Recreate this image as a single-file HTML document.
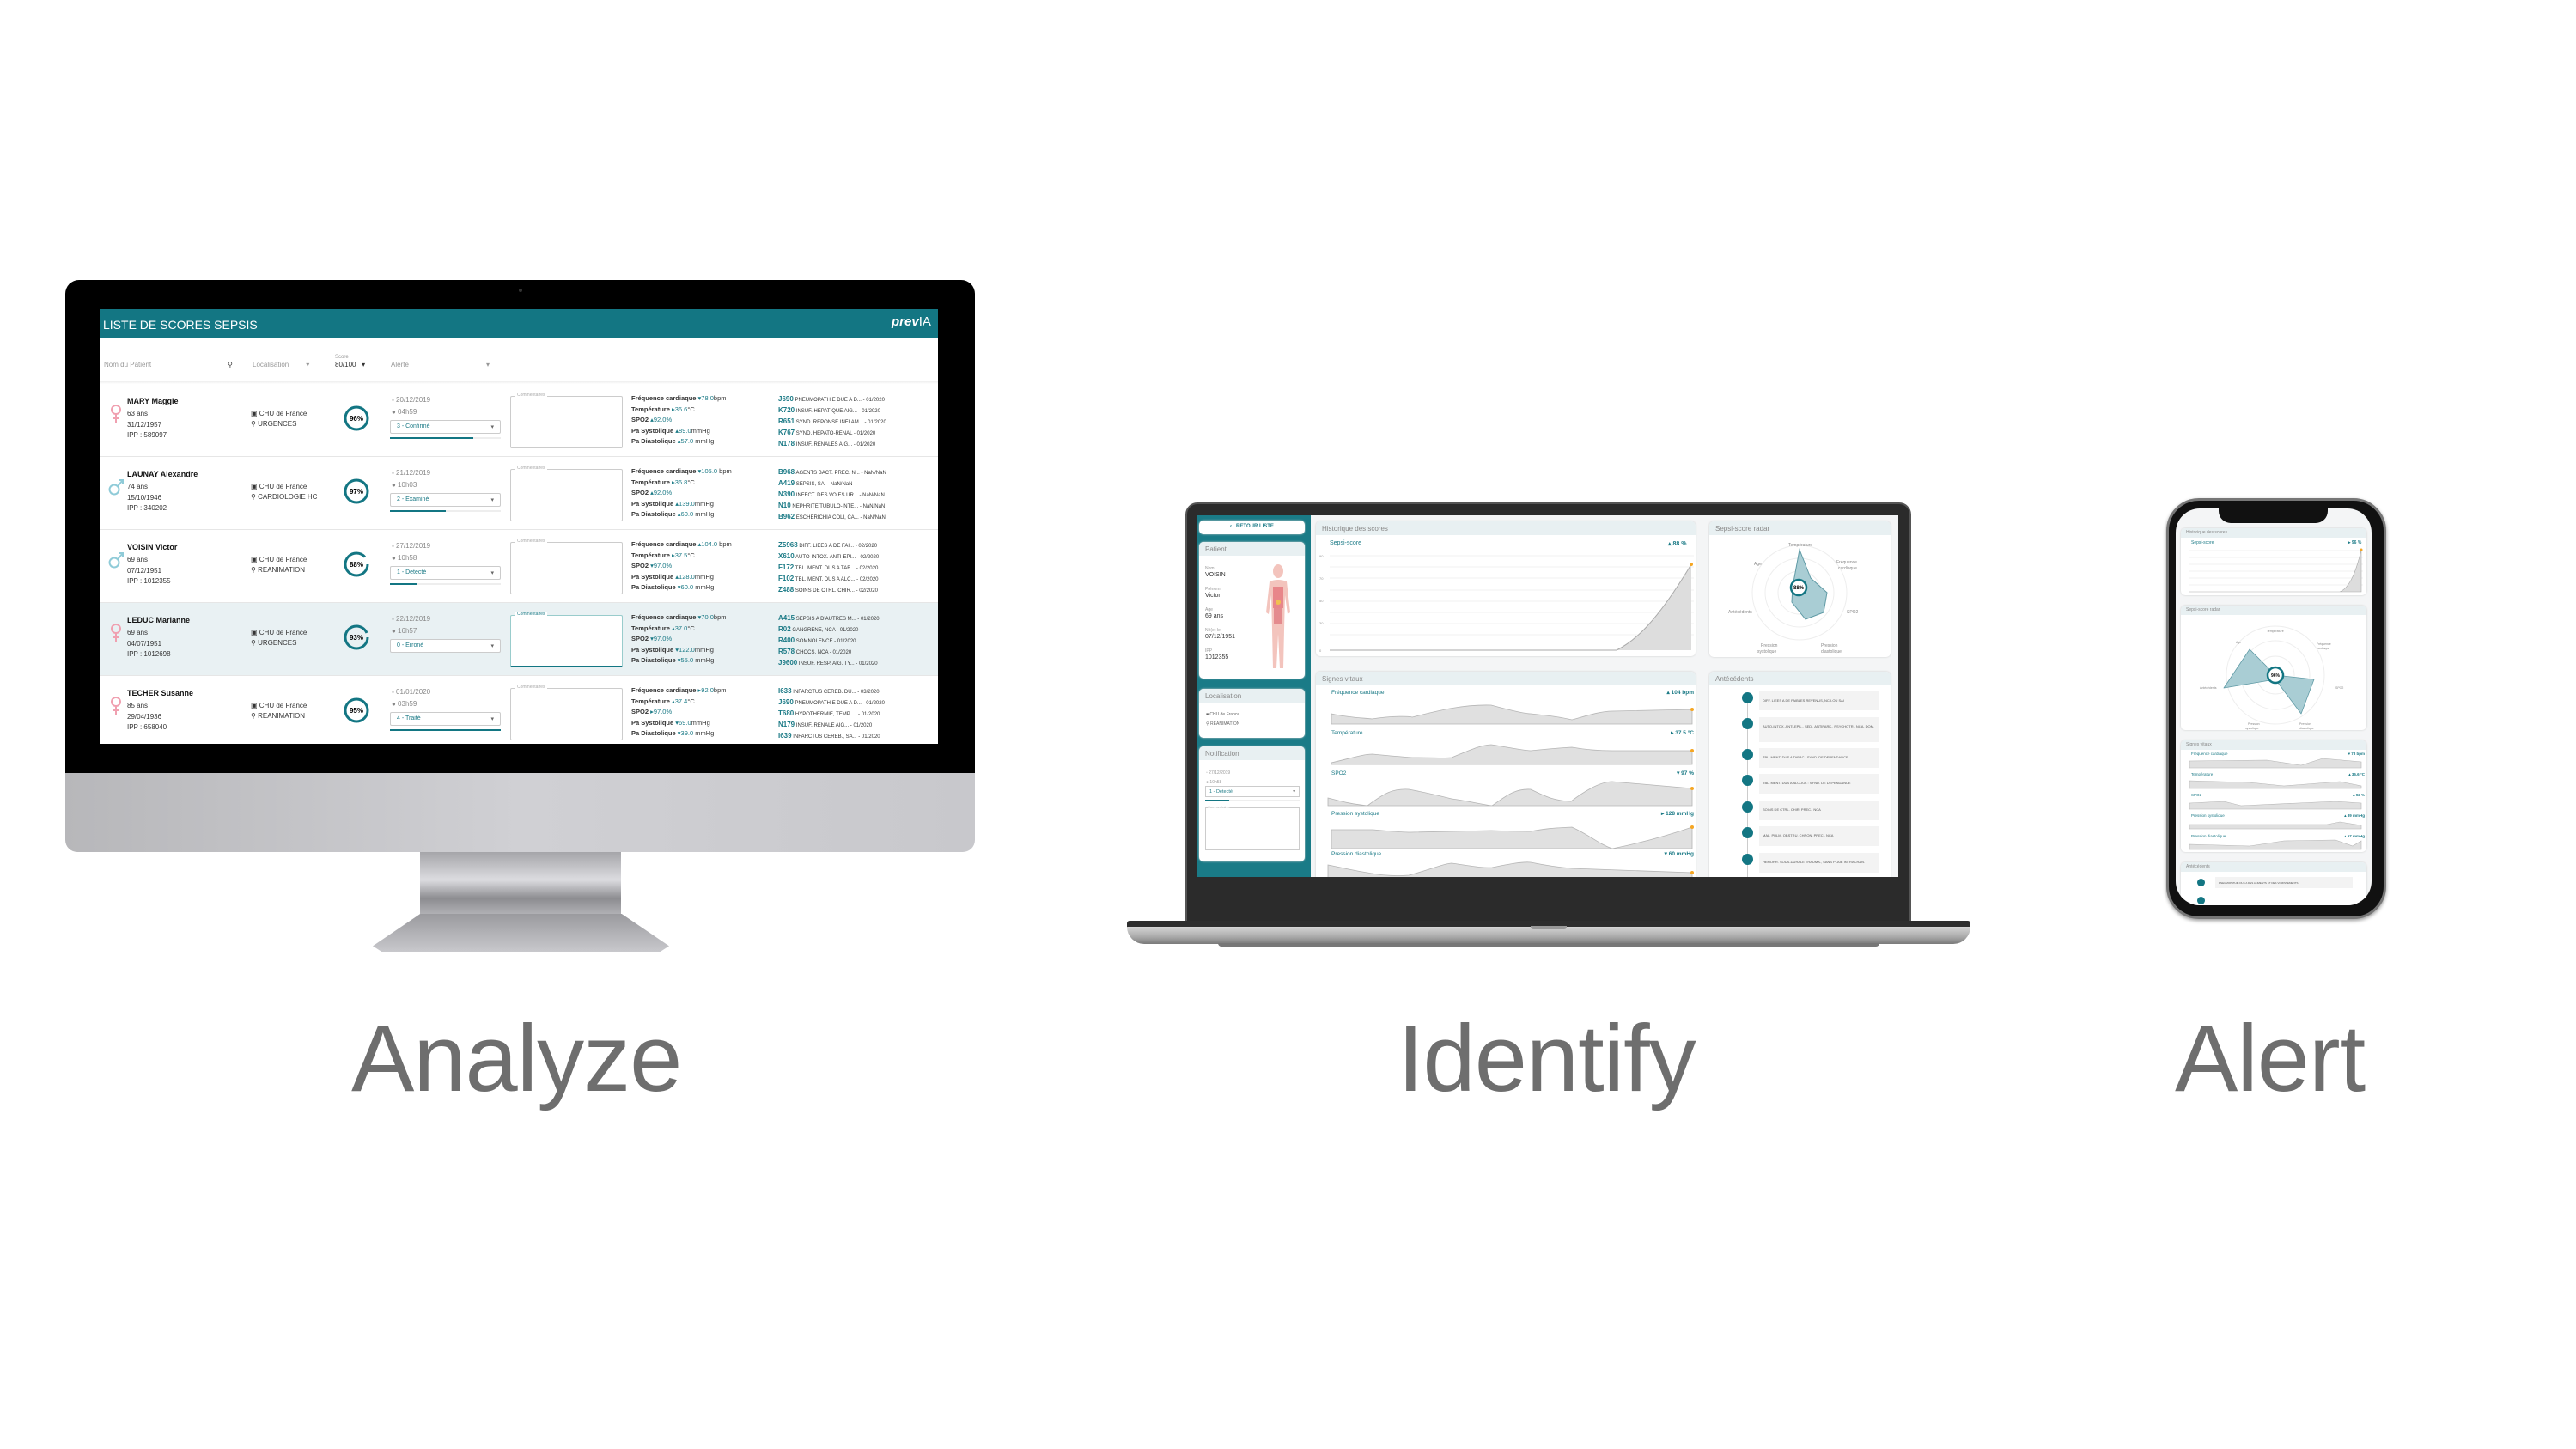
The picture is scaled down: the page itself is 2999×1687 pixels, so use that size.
<!DOCTYPE html>
<html><head><meta charset="utf-8"><style>
*{margin:0;padding:0;box-sizing:border-box}
body{width:2999px;height:1687px;background:#fff;position:relative;overflow:hidden;font-family:"Liberation Sans",sans-serif}
.a{position:absolute}
.lbl{position:absolute;font-size:110px;color:#6e6e6e;letter-spacing:-1px;top:1178px;line-height:1}
.t{position:absolute;white-space:nowrap}
.row{position:absolute;left:0;width:976px;height:85px;border-bottom:1px solid #e6e6e6;font-size:8px;color:#333}
.teal{color:#1b7a86}
.card{position:absolute;background:#fff;border-radius:5px;box-shadow:0 0 2px #ccc;overflow:hidden}
.ch{background:#e8f0f2;color:#888;font-size:8px;padding:4px 7px;height:16px}
</style></head><body>

<!-- MONITOR -->
<div class="a" style="left:76px;top:326px;width:1059px;height:576px;background:#000;border-radius:16px 16px 0 0"></div>
<div class="a" style="left:76px;top:900px;width:1059px;height:92px;background:linear-gradient(90deg,#b7b7ba,#d0d0d4 50%,#c8c8cc);border-radius:0 0 14px 14px"></div>
<div class="a" style="left:489px;top:992px;width:234px;height:72px;background:linear-gradient(180deg,#a5a5a9,#dcdce0 45%,#8c8c90 75%,#b0b0b4)"></div>
<div class="a" style="left:434px;top:1064px;width:345px;height:44px;background:linear-gradient(180deg,#9a9a9e,#c8c8cc);clip-path:polygon(16% 0,84% 0,100% 85%,97% 100%,3% 100%,0 85%)"></div>
<div class="a" style="left:604px;top:336px;width:4px;height:4px;border-radius:2px;background:#333"></div>

<div class="a" style="left:116px;top:360px;width:976px;height:506px;background:#fff;overflow:hidden">
  <div class="a" style="left:0;top:0;width:976px;height:33px;background:#137683"></div>
  <div class="t" style="left:4px;top:10px;color:#fff;font-size:14px">LISTE DE SCORES SEPSIS</div>
  <div class="t" style="left:922px;top:6px;color:#fff;font-size:15px;font-weight:bold;font-style:italic">prev<span style="font-weight:normal;font-style:normal">IA</span></div>
  <div class="t" style="left:5px;top:60px;font-size:8px;color:#999">Nom du Patient</div>
  <div class="a" style="left:5px;top:75px;width:156px;height:1px;background:#aaa"></div>
  <div class="t" style="left:149px;top:60px;font-size:8px;color:#333">&#9906;</div>
  <div class="t" style="left:178px;top:60px;font-size:8px;color:#999">Localisation &nbsp; &nbsp; &nbsp; &nbsp; ▾</div>
  <div class="a" style="left:178px;top:75px;width:80px;height:1px;background:#aaa"></div>
  <div class="t" style="left:274px;top:53px;font-size:6px;color:#999">Score</div>
  <div class="t" style="left:274px;top:60px;font-size:8px;color:#333">80/100 &nbsp; ▾</div>
  <div class="a" style="left:274px;top:75px;width:48px;height:1px;background:#aaa"></div>
  <div class="t" style="left:339px;top:60px;font-size:8px;color:#999">Alerte</div>
  <div class="t" style="left:450px;top:60px;font-size:8px;color:#999">▾</div>
  <div class="a" style="left:339px;top:75px;width:122px;height:1px;background:#aaa"></div>
  <div class="a" style="left:0;top:84px;width:976px;height:3px;background:linear-gradient(#eee,#fff)"></div>

  <div class="row" style="top:87px">
   <svg class="a" style="left:12px;top:24px" width="14" height="22"><circle cx="7" cy="6" r="5" fill="none" stroke="#f0a0b0" stroke-width="2"/><path d="M7 11V21M3 16H11" stroke="#f0a0b0" stroke-width="2"/></svg>
   <div class="t" style="left:32px;top:15px;font-size:9px;font-weight:bold;color:#111">MARY Maggie</div>
   <div class="t" style="left:32px;top:29px;line-height:12.5px">63 ans<br>31/12/1957<br>IPP : 589097</div>
   <div class="t" style="left:176px;top:29px;line-height:12px">▣ CHU de France<br>⚲ URGENCES</div>
   <svg class="a" style="left:284px;top:25px" width="30" height="30"><circle cx="15" cy="15" r="13" fill="none" stroke="#137683" stroke-width="3"/><text x="15" y="18" font-size="8" font-weight="bold" text-anchor="middle" font-family="Liberation Sans">96%</text></svg>
   <div class="t" style="left:340px;top:12px;color:#888;line-height:14px">▫ 20/12/2019<br>● 04h59</div>
   <div class="a" style="left:338px;top:42px;width:129px;height:16px;border:1px solid #ccc;border-radius:2px;font-size:7px;color:#1b7a86;padding:3px 7px">3 - Confirmé<span style="float:right;color:#666">▾</span></div>
   <div class="a" style="left:338px;top:62px;width:129px;height:2px;background:#eee"><div style="width:75%;height:2px;background:#137683"></div></div>
   <div class="a" style="left:478px;top:14px;width:131px;height:61px;border:1px solid #ccc;border-radius:2px"></div>
   <div class="t" style="left:484px;top:10px;font-size:5px;color:#aaa;background:#fff;padding:0 2px">Commentaires</div>
   <div class="t" style="left:619px;top:11px;line-height:12.5px;font-size:7.5px"><b>Fréquence cardiaque</b> <span class="teal">▾78.0</span>bpm<br><b>Température</b> <span class="teal">▸36.6</span>°C<br><b>SPO2</b> <span class="teal">▴92.0%</span><br><b>Pa Systolique</b> <span class="teal">▴89.0</span>mmHg<br><b>Pa Diastolique</b> <span class="teal">▴57.0</span> mmHg</div>
   <div class="t" style="left:790px;top:12px;line-height:12px;font-size:6px"><b class="teal" style="font-size:8px">J690</b> PNEUMOPATHIE DUE A D... - 01/2020<br><b class="teal" style="font-size:8px">K720</b> INSUF. HEPATIQUE AIG... - 01/2020<br><b class="teal" style="font-size:8px">R651</b> SYND. REPONSE INFLAM... - 01/2020<br><b class="teal" style="font-size:8px">K767</b> SYND. HEPATO-RENAL - 01/2020<br><b class="teal" style="font-size:8px">N178</b> INSUF. RENALES AIG... - 01/2020</div>
  </div>

  <div class="row" style="top:172px">
   <svg class="a" style="left:10px;top:24px" width="20" height="22"><circle cx="7" cy="14" r="5.5" fill="none" stroke="#8fcbd8" stroke-width="2"/><path d="M11 10L17 3M12 3H17V8" fill="none" stroke="#8fcbd8" stroke-width="2"/></svg>
   <div class="t" style="left:32px;top:15px;font-size:9px;font-weight:bold;color:#111">LAUNAY Alexandre</div>
   <div class="t" style="left:32px;top:29px;line-height:12.5px">74 ans<br>15/10/1946<br>IPP : 340202</div>
   <div class="t" style="left:176px;top:29px;line-height:12px">▣ CHU de France<br>⚲ CARDIOLOGIE HC</div>
   <svg class="a" style="left:284px;top:25px" width="30" height="30"><circle cx="15" cy="15" r="13" fill="none" stroke="#137683" stroke-width="3"/><text x="15" y="18" font-size="8" font-weight="bold" text-anchor="middle" font-family="Liberation Sans">97%</text></svg>
   <div class="t" style="left:340px;top:12px;color:#888;line-height:14px">▫ 21/12/2019<br>● 10h03</div>
   <div class="a" style="left:338px;top:42px;width:129px;height:16px;border:1px solid #ccc;border-radius:2px;font-size:7px;color:#1b7a86;padding:3px 7px">2 - Examiné<span style="float:right;color:#666">▾</span></div>
   <div class="a" style="left:338px;top:62px;width:129px;height:2px;background:#eee"><div style="width:50%;height:2px;background:#137683"></div></div>
   <div class="a" style="left:478px;top:14px;width:131px;height:61px;border:1px solid #ccc;border-radius:2px"></div>
   <div class="t" style="left:484px;top:10px;font-size:5px;color:#aaa;background:#fff;padding:0 2px">Commentaires</div>
   <div class="t" style="left:619px;top:11px;line-height:12.5px;font-size:7.5px"><b>Fréquence cardiaque</b> <span class="teal">▾105.0</span> bpm<br><b>Température</b> <span class="teal">▸36.8</span>°C<br><b>SPO2</b> <span class="teal">▴92.0%</span><br><b>Pa Systolique</b> <span class="teal">▴139.0</span>mmHg<br><b>Pa Diastolique</b> <span class="teal">▴60.0</span> mmHg</div>
   <div class="t" style="left:790px;top:12px;line-height:12px;font-size:6px"><b class="teal" style="font-size:8px">B968</b> AGENTS BACT. PREC. N... - NaN/NaN<br><b class="teal" style="font-size:8px">A419</b> SEPSIS, SAI - NaN/NaN<br><b class="teal" style="font-size:8px">N390</b> INFECT. DES VOIES UR... - NaN/NaN<br><b class="teal" style="font-size:8px">N10</b> NEPHRITE TUBULO-INTE... - NaN/NaN<br><b class="teal" style="font-size:8px">B962</b> ESCHERICHIA COLI, CA... - NaN/NaN</div>
  </div>

  <div class="row" style="top:257px">
   <svg class="a" style="left:10px;top:24px" width="20" height="22"><circle cx="7" cy="14" r="5.5" fill="none" stroke="#8fcbd8" stroke-width="2"/><path d="M11 10L17 3M12 3H17V8" fill="none" stroke="#8fcbd8" stroke-width="2"/></svg>
   <div class="t" style="left:32px;top:15px;font-size:9px;font-weight:bold;color:#111">VOISIN Victor</div>
   <div class="t" style="left:32px;top:29px;line-height:12.5px">69 ans<br>07/12/1951<br>IPP : 1012355</div>
   <div class="t" style="left:176px;top:29px;line-height:12px">▣ CHU de France<br>⚲ REANIMATION</div>
   <svg class="a" style="left:284px;top:25px" width="30" height="30"><circle cx="15" cy="15" r="13" fill="none" stroke="#137683" stroke-width="3" stroke-dasharray="72 10"/><text x="15" y="18" font-size="8" font-weight="bold" text-anchor="middle" font-family="Liberation Sans">88%</text></svg>
   <div class="t" style="left:340px;top:12px;color:#888;line-height:14px">▫ 27/12/2019<br>● 10h58</div>
   <div class="a" style="left:338px;top:42px;width:129px;height:16px;border:1px solid #ccc;border-radius:2px;font-size:7px;color:#1b7a86;padding:3px 7px">1 - Detecté<span style="float:right;color:#666">▾</span></div>
   <div class="a" style="left:338px;top:62px;width:129px;height:2px;background:#eee"><div style="width:25%;height:2px;background:#137683"></div></div>
   <div class="a" style="left:478px;top:14px;width:131px;height:61px;border:1px solid #ccc;border-radius:2px"></div>
   <div class="t" style="left:484px;top:10px;font-size:5px;color:#aaa;background:#fff;padding:0 2px">Commentaires</div>
   <div class="t" style="left:619px;top:11px;line-height:12.5px;font-size:7.5px"><b>Fréquence cardiaque</b> <span class="teal">▴104.0</span> bpm<br><b>Température</b> <span class="teal">▸37.5</span>°C<br><b>SPO2</b> <span class="teal">▾97.0%</span><br><b>Pa Systolique</b> <span class="teal">▴128.0</span>mmHg<br><b>Pa Diastolique</b> <span class="teal">▾60.0</span> mmHg</div>
   <div class="t" style="left:790px;top:12px;line-height:12px;font-size:6px"><b class="teal" style="font-size:8px">Z5968</b> DIFF. LIEES A DE FAI... - 02/2020<br><b class="teal" style="font-size:8px">X610</b> AUTO-INTOX. ANTI-EPI... - 02/2020<br><b class="teal" style="font-size:8px">F172</b> TBL. MENT. DUS A TAB... - 02/2020<br><b class="teal" style="font-size:8px">F102</b> TBL. MENT. DUS A ALC... - 02/2020<br><b class="teal" style="font-size:8px">Z488</b> SOINS DE CTRL. CHIR... - 02/2020</div>
  </div>

  <div class="row" style="top:342px;background:#e9f1f3">
   <svg class="a" style="left:12px;top:24px" width="14" height="22"><circle cx="7" cy="6" r="5" fill="none" stroke="#f0a0b0" stroke-width="2"/><path d="M7 11V21M3 16H11" stroke="#f0a0b0" stroke-width="2"/></svg>
   <div class="t" style="left:32px;top:15px;font-size:9px;font-weight:bold;color:#111">LEDUC Marianne</div>
   <div class="t" style="left:32px;top:29px;line-height:12.5px">69 ans<br>04/07/1951<br>IPP : 1012698</div>
   <div class="t" style="left:176px;top:29px;line-height:12px">▣ CHU de France<br>⚲ URGENCES</div>
   <svg class="a" style="left:284px;top:25px" width="30" height="30"><circle cx="15" cy="15" r="13" fill="none" stroke="#137683" stroke-width="3" stroke-dasharray="76 6"/><text x="15" y="18" font-size="8" font-weight="bold" text-anchor="middle" font-family="Liberation Sans">93%</text></svg>
   <div class="t" style="left:340px;top:12px;color:#888;line-height:14px">▫ 22/12/2019<br>● 16h57</div>
   <div class="a" style="left:338px;top:42px;width:129px;height:16px;border:1px solid #ccc;background:#fff;border-radius:2px;font-size:7px;color:#1b7a86;padding:3px 7px">0 - Erroné<span style="float:right;color:#666">▾</span></div>
   <div class="a" style="left:478px;top:14px;width:131px;height:61px;border:1px solid #9cc;background:#fff;border-radius:2px;border-bottom:2px solid #137683"></div>
   <div class="t" style="left:484px;top:10px;font-size:5px;color:#1b7a86;background:#fff;padding:0 2px">Commentaires</div>
   <div class="t" style="left:619px;top:11px;line-height:12.5px;font-size:7.5px"><b>Fréquence cardiaque</b> <span class="teal">▾70.0</span>bpm<br><b>Température</b> <span class="teal">▴37.0</span>°C<br><b>SPO2</b> <span class="teal">▾97.0%</span><br><b>Pa Systolique</b> <span class="teal">▾122.0</span>mmHg<br><b>Pa Diastolique</b> <span class="teal">▾55.0</span> mmHg</div>
   <div class="t" style="left:790px;top:12px;line-height:12px;font-size:6px"><b class="teal" style="font-size:8px">A415</b> SEPSIS A D'AUTRES M... - 01/2020<br><b class="teal" style="font-size:8px">R02</b> GANGRENE, NCA - 01/2020<br><b class="teal" style="font-size:8px">R400</b> SOMNOLENCE - 01/2020<br><b class="teal" style="font-size:8px">R578</b> CHOCS, NCA - 01/2020<br><b class="teal" style="font-size:8px">J9600</b> INSUF. RESP. AIG. TY... - 01/2020</div>
  </div>

  <div class="row" style="top:427px;border:none">
   <svg class="a" style="left:12px;top:24px" width="14" height="22"><circle cx="7" cy="6" r="5" fill="none" stroke="#f0a0b0" stroke-width="2"/><path d="M7 11V21M3 16H11" stroke="#f0a0b0" stroke-width="2"/></svg>
   <div class="t" style="left:32px;top:15px;font-size:9px;font-weight:bold;color:#111">TECHER Susanne</div>
   <div class="t" style="left:32px;top:29px;line-height:12.5px">85 ans<br>29/04/1936<br>IPP : 658040</div>
   <div class="t" style="left:176px;top:29px;line-height:12px">▣ CHU de France<br>⚲ REANIMATION</div>
   <svg class="a" style="left:284px;top:25px" width="30" height="30"><circle cx="15" cy="15" r="13" fill="none" stroke="#137683" stroke-width="3"/><text x="15" y="18" font-size="8" font-weight="bold" text-anchor="middle" font-family="Liberation Sans">95%</text></svg>
   <div class="t" style="left:340px;top:12px;color:#888;line-height:14px">▫ 01/01/2020<br>● 03h59</div>
   <div class="a" style="left:338px;top:42px;width:129px;height:16px;border:1px solid #ccc;border-radius:2px;font-size:7px;color:#1b7a86;padding:3px 7px">4 - Traité<span style="float:right;color:#666">▾</span></div>
   <div class="a" style="left:338px;top:62px;width:129px;height:2px;background:#137683"></div>
   <div class="a" style="left:478px;top:14px;width:131px;height:61px;border:1px solid #ccc;border-radius:2px"></div>
   <div class="t" style="left:484px;top:10px;font-size:5px;color:#aaa;background:#fff;padding:0 2px">Commentaires</div>
   <div class="t" style="left:619px;top:11px;line-height:12.5px;font-size:7.5px"><b>Fréquence cardiaque</b> <span class="teal">▸92.0</span>bpm<br><b>Température</b> <span class="teal">▴37.4</span>°C<br><b>SPO2</b> <span class="teal">▸97.0%</span><br><b>Pa Systolique</b> <span class="teal">▾69.0</span>mmHg<br><b>Pa Diastolique</b> <span class="teal">▾39.0</span> mmHg</div>
   <div class="t" style="left:790px;top:12px;line-height:12px;font-size:6px"><b class="teal" style="font-size:8px">I633</b> INFARCTUS CEREB. DU... - 03/2020<br><b class="teal" style="font-size:8px">J690</b> PNEUMOPATHIE DUE A D... - 01/2020<br><b class="teal" style="font-size:8px">T680</b> HYPOTHERMIE, TEMP. ... - 01/2020<br><b class="teal" style="font-size:8px">N179</b> INSUF. RENALE AIG... - 01/2020<br><b class="teal" style="font-size:8px">I639</b> INFARCTUS CEREB., SA... - 01/2020</div>
  </div>
</div>

<!-- LAPTOP -->
<div class="a" style="left:1380px;top:585px;width:845px;height:490px;background:#2b2b2b;border-radius:14px 14px 0 0;border:2px solid #555"></div>
<div class="a" style="left:1312px;top:1072px;width:982px;height:8px;background:#2e2e2e;border-radius:3px 3px 0 0"></div>
<div class="a" style="left:1312px;top:1079px;width:982px;height:20px;background:linear-gradient(#d6d6d6,#a8a8a8 60%,#7a7a7a);border-radius:0 0 40px 40px"></div>
<div class="a" style="left:1782px;top:1078px;width:42px;height:4px;background:#999;border-radius:0 0 3px 3px"></div>
<div class="a" style="left:1418px;top:1098px;width:770px;height:4px;background:#777;border-radius:0 0 4px 4px"></div>

<div class="a" style="left:1393px;top:600px;width:817px;height:421px;background:#f4f5f6;overflow:hidden">
  <div class="a" style="left:0;top:0;width:133px;height:421px;background:#1a7b87"></div>
  <div class="card" style="left:3px;top:6px;width:123px;height:16px;font-size:6px;color:#1b7a86;text-align:center;padding-top:4px;font-weight:bold">‹ &nbsp; RETOUR LISTE</div>
  <div class="card" style="left:3px;top:31px;width:123px;height:159px">
    <div class="ch">Patient</div>
    <div class="t" style="left:7px;top:27px;font-size:5px;color:#999;line-height:8px">Nom<br><span style="font-size:7px;color:#333">VOISIN</span><br><br>Prénom<br><span style="font-size:7px;color:#333">Victor</span><br><br>Age<br><span style="font-size:7px;color:#333">69 ans</span><br><br>Né(e) le<br><span style="font-size:7px;color:#333">07/12/1951</span><br><br>IPP<br><span style="font-size:7px;color:#333">1012355</span></div>
    <svg class="a" style="left:72px;top:22px" width="40" height="130"><ellipse cx="20" cy="12" rx="6" ry="8" fill="#f3c4bd"/><path d="M10 24 Q20 20 30 24 L34 60 L31 62 L28 40 L27 80 L26 125 L22 125 L20 85 L18 125 L14 125 L13 80 L12 40 L9 62 L6 60 Z" fill="#f3c4bd"/><path d="M14 30 h12 v25 h-12z" fill="#e8868a"/><path d="M15 55 h10 v18 h-10z" fill="#e48b8e"/><circle cx="20" cy="48" r="3" fill="#f0c050"/></svg>
  </div>
  <div class="card" style="left:3px;top:202px;width:123px;height:57px"><div class="ch">Localisation</div><div class="t" style="left:8px;top:25px;font-size:5px;color:#666;line-height:11px">■ CHU de France<br>⚲ REANIMATION</div></div>
  <div class="card" style="left:3px;top:269px;width:123px;height:134px"><div class="ch">Notification</div><div class="t" style="left:8px;top:26px;font-size:5px;color:#999;line-height:11px">▫ 27/12/2019<br>● 10h58</div>
    <div class="a" style="left:7px;top:46px;width:110px;height:13px;border:1px solid #ccc;font-size:5.5px;color:#1b7a86;padding:3px 4px">1 - Detecté<span style="float:right;color:#555">▾</span></div>
    <div class="a" style="left:7px;top:62px;width:110px;height:2px;background:#eee"><div style="width:25%;height:2px;background:#137683"></div></div>
    <div class="a" style="left:7px;top:71px;width:110px;height:50px;border:1px solid #ccc"></div><div class="t" style="left:10px;top:68px;font-size:4px;color:#aaa;background:#fff">Commentaires</div>
  </div>

  <div class="card" style="left:139px;top:7px;width:442px;height:157px"><div class="ch">Historique des scores</div>
   <div class="t teal" style="left:16px;top:22px;font-size:7px">Sepsi-score</div><div class="t teal" style="left:410px;top:22px;font-size:7px;font-weight:bold">▴ 88 %</div>
   <svg class="a" style="left:0;top:30px" width="442" height="125"><g stroke="#f0f0f0"><path d="M16 10H440M16 23H440M16 36H440M16 50H440M16 63H440M16 76H440M16 89H440M16 102H440"/></g><path d="M16 120 L350 120 C370 110 395 90 437 20 L437 120Z" fill="#ddd"/><path d="M16 120 L350 120 C370 110 395 90 437 20" fill="none" stroke="#aaa"/><circle cx="437" cy="20" r="2" fill="#f5a623"/><g font-size="4" fill="#999" font-family="Liberation Sans"><text x="4" y="12">90</text><text x="4" y="38">70</text><text x="4" y="64">50</text><text x="4" y="90">30</text><text x="4" y="122">0</text></g></svg>
  </div>
  <div class="card" style="left:597px;top:7px;width:211px;height:158px"><div class="ch">Sepsi-score radar</div>
   <svg class="a" style="left:0;top:16px" width="211" height="140"><g fill="none" stroke="#eee"><circle cx="105" cy="67" r="55"/><circle cx="105" cy="67" r="40"/><circle cx="105" cy="67" r="25"/></g><path d="M105 17 L118 50 L137 67 L133 90 L112 98 L96 78 L97 60Z" fill="#a9cdd4" stroke="#5f9aa5" stroke-width="1"/><circle cx="104" cy="61" r="9" fill="#fff" stroke="#137683" stroke-width="2.5"/><text x="104" y="63" font-size="6" text-anchor="middle" font-family="Liberation Sans" font-weight="bold">88%</text><g font-size="5" fill="#888" font-family="Liberation Sans"><text x="92" y="13">Température</text><text x="148" y="33">Fréquence</text><text x="150" y="40">cardiaque</text><text x="52" y="35">Age</text><text x="22" y="91">Antécédents</text><text x="160" y="91">SPO2</text><text x="60" y="130">Pression</text><text x="56" y="137">systolique</text><text x="130" y="130">Pression</text><text x="130" y="137">diastolique</text></g></svg>
  </div>
  <div class="card" style="left:139px;top:182px;width:442px;height:250px"><div class="ch">Signes vitaux</div>
   <svg class="a" style="left:0;top:16px" width="442" height="240" font-family="Liberation Sans">
    <g font-size="6.5" fill="#1b7a86"><text x="18" y="10">Fréquence cardiaque</text><text x="18" y="57">Température</text><text x="18" y="104">SPO2</text><text x="18" y="151">Pression systolique</text><text x="18" y="198">Pression diastolique</text></g>
    <g font-size="6.5" fill="#1b7a86" font-weight="bold" text-anchor="end"><text x="440" y="10">▴ 104 bpm</text><text x="440" y="57">▸ 37.5 °C</text><text x="440" y="104">▾ 97 %</text><text x="440" y="151">▸ 128 mmHg</text><text x="440" y="198">▾ 60 mmHg</text></g>
    <g fill="#e0e0e0" stroke="#b5b5b5" stroke-width="0.8">
     <path d="M18 33 C40 38,60 38,65 39 C90 35,110 36,112 37 C140 30,170 22,204 23 C230 30,245 33,250 33 C270 35,290 38,298 40 C310 37,330 30,345 30 L438 28 L438 45 L18 45Z"/>
     <path d="M18 90 C40 85,55 80,66 80 C85 82,100 83,112 84 C140 84,150 85,158 84 C180 75,190 70,204 69 C225 72,235 75,250 76 C270 74,280 73,298 72 C315 75,330 76,345 76 L438 76 L438 92 L18 92Z"/>
     <path d="M14 131 C30 135,40 138,60 140 C80 125,90 120,108 121 C130 125,150 130,158 132 C180 135,190 138,205 140 C220 130,230 120,250 121 C265 128,275 134,297 135 C310 125,330 112,345 112 L438 120 L438 140 L14 140Z"/>
     <path d="M18 168 L66 168 C90 170,100 171,110 171 L204 169 C230 170,240 170,250 170 C270 166,280 166,298 165 C320 175,330 185,345 190 C370 185,400 178,438 165 L438 190 L18 190Z"/>
     <path d="M14 209 C30 212,45 216,60 218 C80 222,95 222,108 221 C135 214,150 207,158 207 C180 210,195 213,205 212 C225 208,240 205,250 206 C270 210,285 212,298 213 L438 218 L438 235 L14 235Z"/>
    </g>
    <g fill="#f5a623"><circle cx="438" cy="28" r="2"/><circle cx="438" cy="76" r="2"/><circle cx="438" cy="120" r="2"/><circle cx="438" cy="165" r="2"/><circle cx="438" cy="218" r="2"/></g>
   </svg>
  </div>
  <div class="card" style="left:597px;top:182px;width:211px;height:250px"><div class="ch">Antécédents</div>
   <div class="a" style="left:44px;top:30px;width:1px;height:220px;background:#ccc"></div>
   <div class="a" style="left:38px;top:24px;width:13px;height:13px;border-radius:50%;background:#137683"></div><div class="a" style="left:58px;top:23px;width:140px;height:22px;background:#f3f3f3;font-size:4px;padding:8px 4px;color:#555">DIFF. LIEES A DE FAIBLES REVENUS, NCA OU SAI</div>
   <div class="a" style="left:38px;top:54px;width:13px;height:13px;border-radius:50%;background:#137683"></div><div class="a" style="left:58px;top:53px;width:140px;height:29px;background:#f3f3f3;font-size:4px;padding:8px 4px;color:#555">AUTO-INTOX. ANTI-EPIL., SED., ANTIPARK., PSYCHOTR., NCA, DOM.</div>
   <div class="a" style="left:38px;top:90px;width:13px;height:13px;border-radius:50%;background:#137683"></div><div class="a" style="left:58px;top:89px;width:140px;height:23px;background:#f3f3f3;font-size:4px;padding:8px 4px;color:#555">TBL. MENT. DUS A TABAC : SYND. DE DEPENDANCE</div>
   <div class="a" style="left:38px;top:120px;width:13px;height:13px;border-radius:50%;background:#137683"></div><div class="a" style="left:58px;top:119px;width:140px;height:23px;background:#f3f3f3;font-size:4px;padding:8px 4px;color:#555">TBL. MENT. DUS A ALCOOL : SYND. DE DEPENDANCE</div>
   <div class="a" style="left:38px;top:151px;width:13px;height:13px;border-radius:50%;background:#137683"></div><div class="a" style="left:58px;top:150px;width:140px;height:23px;background:#f3f3f3;font-size:4px;padding:8px 4px;color:#555">SOINS DE CTRL. CHIR. PREC., NCA</div>
   <div class="a" style="left:38px;top:181px;width:13px;height:13px;border-radius:50%;background:#137683"></div><div class="a" style="left:58px;top:180px;width:140px;height:23px;background:#f3f3f3;font-size:4px;padding:8px 4px;color:#555">MAL. PULM. OBSTRU. CHRON. PREC., NCA</div>
   <div class="a" style="left:38px;top:212px;width:13px;height:13px;border-radius:50%;background:#137683"></div><div class="a" style="left:58px;top:211px;width:140px;height:23px;background:#f3f3f3;font-size:4px;padding:8px 4px;color:#555">HEMORR. SOUS-DURALE TRAUMA., SANS PLAIE INTRACRAN.</div>
  </div>
</div>

<!-- PHONE -->
<div class="a" style="left:2522px;top:580px;width:256px;height:490px;border-radius:38px;background:#111;border:3px solid #777;box-shadow:0 2px 4px #999"></div>
<div class="a" style="left:2533px;top:592px;width:228px;height:462px;border-radius:28px;background:#f4f5f6;overflow:hidden">
  <div class="card" style="left:6px;top:23px;width:216px;height:78px"><div class="ch" style="font-size:5px;height:11px;padding:2px 6px">Historique des scores</div>
   <div class="t teal" style="left:12px;top:14px;font-size:5px">Sepsi-score</div><div class="t teal" style="left:195px;top:14px;font-size:5px;font-weight:bold">▸ 96 %</div>
   <svg class="a" style="left:0;top:20px" width="216" height="58"><g stroke="#f0f0f0"><path d="M10 6H212M10 14H212M10 22H212M10 30H212M10 38H212M10 46H212"/></g><path d="M10 54 L185 54 C195 50,203 35,210 5 L210 54Z" fill="#ddd" stroke="#aaa" stroke-width=".6"/><circle cx="210" cy="5" r="1.5" fill="#f5a623"/></svg>
  </div>
  <div class="card" style="left:6px;top:113px;width:216px;height:145px"><div class="ch" style="font-size:5px;height:11px;padding:2px 6px">Sepsi-score radar</div>
   <svg class="a" style="left:0;top:11px" width="216" height="134" font-family="Liberation Sans"><g fill="none" stroke="#eee"><circle cx="110" cy="70" r="57"/><circle cx="110" cy="70" r="40"/><circle cx="110" cy="70" r="22"/></g><path d="M110 70 L80 40 L50 85 L110 75 L140 115 L155 75 Z" fill="#a9cdd4" stroke="#5f9aa5" stroke-width=".8" stroke-linejoin="round"/><circle cx="110" cy="70" r="9" fill="#fff" stroke="#137683" stroke-width="2.5"/><text x="110" y="72" font-size="5" text-anchor="middle" font-weight="bold">96%</text><g font-size="3.5" fill="#888"><text x="100" y="20">Température</text><text x="158" y="35">Fréquence</text><text x="158" y="40">cardiaque</text><text x="64" y="33">Age</text><text x="22" y="86">Antécédents</text><text x="180" y="86">SPO2</text><text x="78" y="128">Pression</text><text x="75" y="133">systolique</text><text x="138" y="128">Pression</text><text x="138" y="133">diastolique</text></g></svg>
  </div>
  <div class="card" style="left:6px;top:270px;width:216px;height:130px"><div class="ch" style="font-size:5px;height:11px;padding:2px 6px">Signes vitaux</div>
   <svg class="a" style="left:0;top:11px" width="216" height="120" font-family="Liberation Sans">
    <g font-size="4.5" fill="#1b7a86"><text x="12" y="6">Fréquence cardiaque</text><text x="12" y="30">Température</text><text x="12" y="54">SPO2</text><text x="12" y="78">Pression systolique</text><text x="12" y="102">Pression diastolique</text></g>
    <g font-size="4.5" fill="#1b7a86" font-weight="bold" text-anchor="end"><text x="214" y="6">▾ 78 bpm</text><text x="214" y="30">▴ 36.6 °C</text><text x="214" y="54">▴ 92 %</text><text x="214" y="78">▴ 89 mmHg</text><text x="214" y="102">▴ 57 mmHg</text></g>
    <g fill="#e0e0e0" stroke="#b5b5b5" stroke-width=".6"><path d="M10 13 L100 12 L140 18 L165 10 L210 14 L210 21 L10 21Z"/><path d="M10 36 L80 38 L120 42 L185 37 L210 42 L210 45 L10 45Z"/><path d="M10 62 L50 60 L70 65 L180 60 L210 62 L210 69 L10 69Z"/><path d="M10 87 L170 87 L185 84 L210 88 L210 92 L10 92Z"/><path d="M10 110 L80 112 L120 106 L180 105 L200 112 L210 106 L210 116 L10 116Z"/></g>
   </svg>
  </div>
  <div class="card" style="left:6px;top:412px;width:216px;height:60px"><div class="ch" style="font-size:5px;height:11px;padding:2px 6px">Antécédents</div>
   <div class="a" style="left:19px;top:19px;width:9px;height:9px;border-radius:50%;background:#137683"></div><div class="a" style="left:40px;top:17px;width:160px;height:13px;background:#f3f3f3;font-size:3px;padding:5px 4px;color:#555">PNEUMOPATHIE DUE A DES ALIMENTS ET DES VOMISSEMENTS</div>
   <div class="a" style="left:19px;top:40px;width:9px;height:9px;border-radius:50%;background:#137683"></div>
  </div>
</div>
<div class="a" style="left:2583px;top:589px;width:127px;height:20px;background:#111;border-radius:0 0 14px 14px"></div>

<div class="lbl" style="left:409px">Analyze</div>
<div class="lbl" style="left:1627px">Identify</div>
<div class="lbl" style="left:2532px">Alert</div>
</body></html>
